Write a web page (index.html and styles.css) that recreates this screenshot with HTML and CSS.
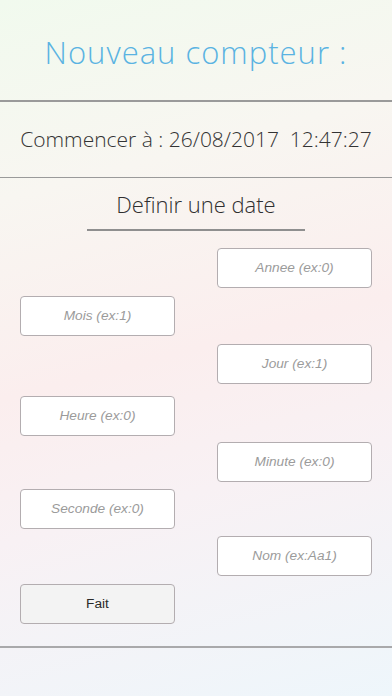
FILE: index.html
```html
<!DOCTYPE html>
<html lang="fr">
<head>
<meta charset="utf-8">
<link rel="stylesheet" href="styles.css">
</head>
<body>
<div class="screen">
  <header class="title-bar">
    <h1 class="title">Nouveau compteur :</h1>
  </header>
  <div class="rule"></div>
  <div class="start-row">
    <span class="start-text">Commencer à : 26/08/2017&nbsp;&nbsp;12:47:27</span>
  </div>
  <div class="rule"></div>
  <div class="define">
    <span class="define-text">Definir une date</span>
    <div class="define-line"></div>
  </div>
  <div class="form">
    <div class="field right f-annee">Annee (ex:0)</div>
    <div class="field left f-mois">Mois (ex:1)</div>
    <div class="field right f-jour">Jour (ex:1)</div>
    <div class="field left f-heure">Heure (ex:0)</div>
    <div class="field right f-minute">Minute (ex:0)</div>
    <div class="field left f-seconde">Seconde (ex:0)</div>
    <div class="field right f-nom">Nom (ex:Aa1)</div>
    <div class="button left f-fait">Fait</div>
  </div>
  <div class="rule bottom"></div>
</div>
</body>
</html>
```

FILE: styles.css
```css
html, body {
  margin: 0;
  padding: 0;
}
body {
  width: 392px;
  height: 696px;
  overflow: hidden;
  background: linear-gradient(165deg, #f1faee 0%, #f8f6f1 25%, #fbeeee 50%, #f8f1f4 68%, #eef6fb 100%);
  font-family: "Open Sans", Lato, sans-serif;
}
.screen {
  display: flex;
  flex-direction: column;
  height: 696px;
}
.title-bar {
  height: 100px;
  display: flex;
  align-items: center;
  justify-content: center;
}
.title {
  margin: 0;
  padding-top: 4px;
  font-size: 31px;
  font-weight: 300;
  color: #5ab3e2;
  letter-spacing: 1px;
}
.rule {
  height: 1.5px;
  background: #9a9a9a;
}
.rule.bottom {
  height: 2px;
  background: #a9a9ab;
  margin-top: 22px;
}
.start-row {
  height: 75px;
  display: flex;
  align-items: center;
  justify-content: center;
}
.start-text {
  font-size: 21px;
  font-weight: 300;
  color: #333333;
  white-space: pre;
}
.define {
  display: flex;
  flex-direction: column;
  align-items: center;
  padding-top: 12px;
}
.define-text {
  font-size: 22px;
  font-weight: 300;
  color: #2f2f2f;
  line-height: 28px;
}
.define-line {
  width: 218px;
  height: 1.5px;
  background: #8f8f8f;
  margin-top: 11px;
}
.form {
  display: flex;
  flex-direction: column;
  gap: 8px;
  padding: 17px 20px 0;
}
.field, .button {
  box-sizing: border-box;
  width: 155px;
  height: 40px;
  border: 1px solid #b3adb0;
  border-radius: 4px;
  background: #ffffff;
  display: flex;
  align-items: center;
  justify-content: center;
  font-family: "Liberation Sans", Arial, sans-serif;
  font-size: 13.7px;
  font-style: italic;
  color: #9b9b9b;
}
.button {
  background: #f3f3f3;
  font-style: normal;
  color: #2a2a2a;
}
.left { align-self: flex-start; }
.right { align-self: flex-end; }
.f-heure { margin-top: 4px; }
.f-minute { margin-top: -2px; }
.f-seconde { margin-top: -1px; }
.f-nom { margin-top: -1px; }
```
